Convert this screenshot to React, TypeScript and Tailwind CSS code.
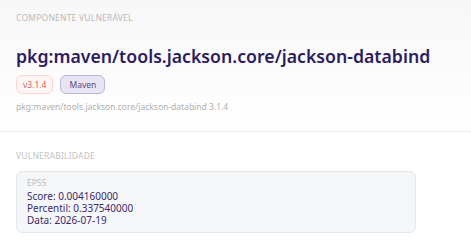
const App = () => {
  return (
    <div className="min-h-screen bg-white" style={{ fontFamily: '"Noto Sans", "Open Sans", sans-serif' }}>
      {/* Cabeçalho do componente */}
      <header className="h-[132px] bg-gradient-to-b from-[#f7f7f7] to-white px-4 pt-3 border-b border-[#ececec]">
        <p className="text-[8.5px] leading-3 uppercase tracking-wide text-[#b9b9b9]">Componente vulnerável</p>
        <h1 className="mt-[20px] whitespace-nowrap text-[17.7px] leading-6 font-semibold text-[#2d1d5e]">
          pkg:maven/tools.jackson.core/jackson-databind
        </h1>
        <div className="mt-[7px] flex items-center gap-[7px]">
          <span className="rounded-md border border-[#fbd5d5] bg-[#fff5f5] px-1.5 py-[2.5px] text-[8.5px] leading-3 text-[#e0605c]">
            v3.1.4
          </span>
          <span className="rounded-md border border-[#bdb4d6] bg-[#e8e4f1] px-2 py-[2.5px] text-[8.5px] leading-3 text-[#5a4a85]">
            Maven
          </span>
        </div>
        <p className="mt-[7px] text-[8.5px] leading-3 text-[#b0b0b0]">pkg:maven/tools.jackson.core/jackson-databind 3.1.4</p>
      </header>

      {/* Vulnerabilidade */}
      <main className="px-4 pt-[18px]">
        <p className="text-[8.5px] leading-3 uppercase tracking-wide text-[#c2c2c2]">Vulnerabilidade</p>
        <div className="mt-[9px] h-[62px] w-[400px] rounded-md border border-[#e6e7ea] bg-[#f5f6f8] px-[10px] pt-[5px]">
          <p className="text-[8.5px] leading-3 text-[#bdbdbd]">EPSS</p>
          <div className="mt-px text-[10px] leading-[12px] text-[#3b2a6b]">
            <p>Score: 0.004160000</p>
            <p>Percentil: 0.337540000</p>
            <p>Data: 2026-07-19</p>
          </div>
        </div>
      </main>
    </div>
  );
};

export default App;
